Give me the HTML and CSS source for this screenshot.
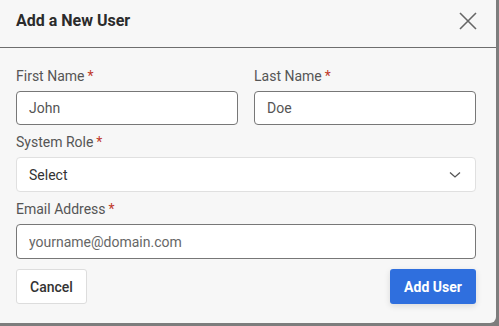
FILE: index.html
```html
<!DOCTYPE html>
<html lang="en">
<head>
  <meta charset="UTF-8" />
  <title>Add a New User</title>
  <link rel="stylesheet" href="styles.css">
</head>
<body>
  <div class="dialog">
    <div class="dialog-header">
      <h4>Add a New User</h4>
      <button type="button" class="close-btn" aria-label="Close">
        <svg width="18" height="18" viewBox="0 0 18 18">
          <path d="M1 1 L17 17 M17 1 L1 17" stroke="#666" stroke-width="1.6" fill="none" />
        </svg>
      </button>
    </div>

    <form class="dialog-body" id="userForm">
      <div class="row">
        <div class="field">
          <label class="form-label">First Name<span class="req">*</span></label>
          <input type="text" class="form-control" value="John" />
        </div>
        <div class="field">
          <label class="form-label">Last Name<span class="req">*</span></label>
          <input type="text" class="form-control" value="Doe" />
        </div>
      </div>

      <div class="field">
        <label class="form-label">System Role<span class="req">*</span></label>
        <div class="select">
          <span>Select</span>
          <svg width="12" height="8" viewBox="0 0 12 8">
            <path d="M1 1.5 L6 6 L11 1.5" stroke="#555" stroke-width="1.3" fill="none" />
          </svg>
        </div>
      </div>

      <div class="field">
        <label class="form-label">Email Address<span class="req">*</span></label>
        <input type="email" class="form-control email" placeholder="yourname@domain.com" />
      </div>

      <div class="actions">
        <button type="button" class="btn btn-cancel">Cancel</button>
        <button type="submit" class="btn btn-primary">Add User</button>
      </div>
    </form>
  </div>
</body>
</html>
```

FILE: styles.css
```css
* {
  box-sizing: border-box;
  margin: 0;
  padding: 0;
  font-family: Roboto, "Liberation Sans", Arial, sans-serif;
}

body {
  background: #7d7d7d;
  height: 100vh;
}

.dialog {
  width: 496px;
  height: 323px;
  background: #f7f7f7;
  border-radius: 0 0 6px 0;
}

.dialog-header {
  height: 48px;
  display: flex;
  align-items: center;
  justify-content: space-between;
  padding: 0 19px 6px 16px;
  border-bottom: 1px solid #6e6e6e;
}

h4 {
  font-size: 16px;
  font-weight: 700;
  color: #2b2b2b;
}

.close-btn {
  background: none;
  border: none;
  display: flex;
  cursor: pointer;
}

.dialog-body {
  padding: 20px 20px 0 16px;
  display: flex;
  flex-direction: column;
  gap: 9px;
}

.row {
  display: flex;
  gap: 16px;
}

.row .field {
  flex: 1;
}

.form-label {
  display: block;
  font-size: 14px;
  line-height: 16px;
  color: #555;
  margin-bottom: 7px;
}

.req {
  color: #c0392b;
  margin-left: 3px;
}

.form-control {
  width: 100%;
  height: 34px;
  padding: 0 12px;
  border: 1px solid #777;
  border-radius: 4px;
  background: #fff;
  font-size: 14px;
  color: #555;
}

.form-control.email {
  height: 35px;
}

.form-control::placeholder {
  color: #666;
}

.select {
  height: 35px;
  display: flex;
  align-items: center;
  justify-content: space-between;
  padding: 0 14px 0 12px;
  background: #fff;
  border: 1px solid #e0e0e0;
  border-radius: 4px;
  font-size: 14px;
  color: #333;
}

.actions {
  display: flex;
  justify-content: space-between;
  margin-top: 1px;
}

.btn {
  height: 35px;
  border-radius: 3px;
  font-size: 14px;
  cursor: pointer;
}

.btn-cancel {
  width: 71px;
  background: #fff;
  border: 1px solid #ddd;
  color: #333;
  font-weight: 500;
}

.btn-primary {
  width: 86px;
  background: #2f6fde;
  border: none;
  color: #fff;
  font-weight: 700;
  box-shadow: 0 2px 6px rgba(0, 0, 0, 0.12);
}

.btn-primary:hover {
  background: #255bb8;
}
```
